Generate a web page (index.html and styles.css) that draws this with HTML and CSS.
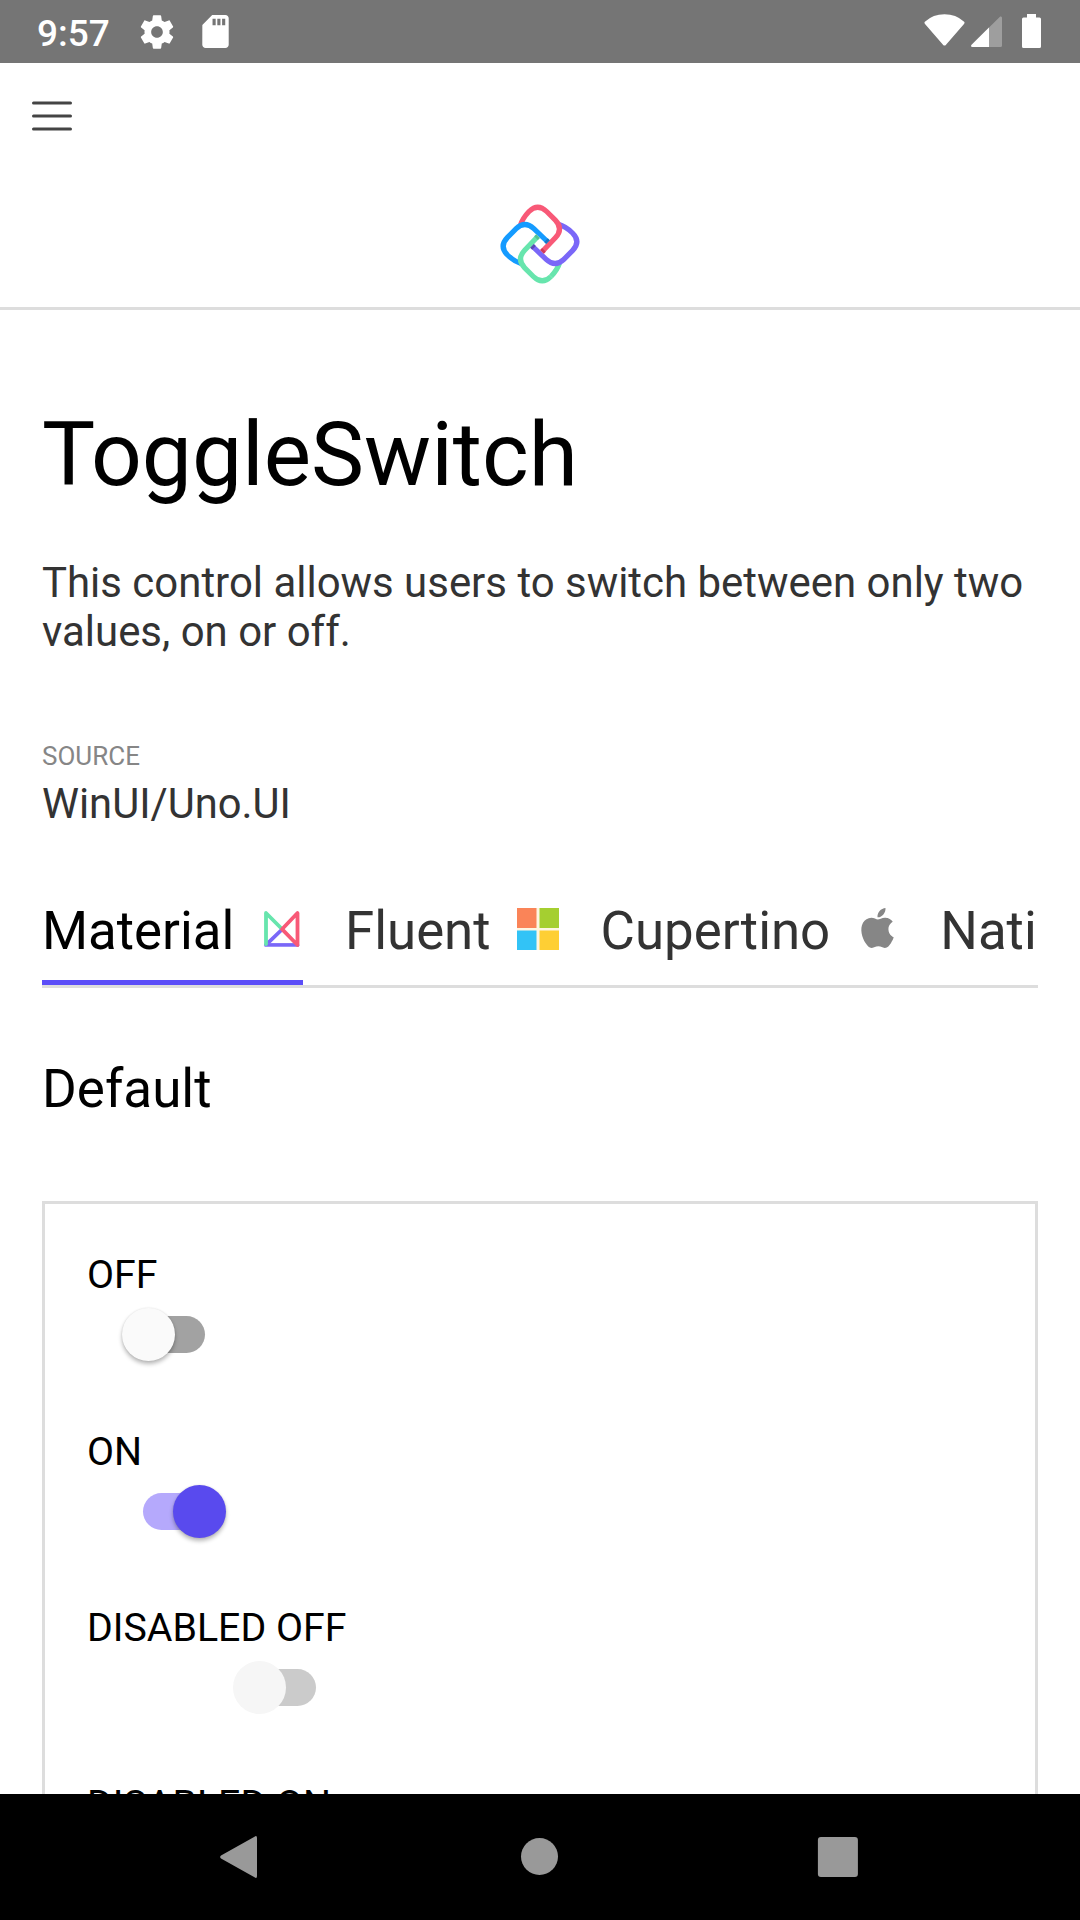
FILE: index.html
```html
<!DOCTYPE html>
<html lang="en">
<head>
<meta charset="utf-8">
<title>ToggleSwitch</title>
<link rel="stylesheet" href="styles.css">
</head>
<body>
<div class="screen">
  <div class="status-bar">
    <span class="time">9:57</span>
    <svg class="icon-gear" viewBox="0 0 24 24"><path d="M19.43 12.98c.04-.32.07-.64.07-.98s-.03-.66-.07-.98l2.11-1.65c.19-.15.24-.42.12-.64l-2-3.46c-.12-.22-.39-.3-.61-.22l-2.49 1c-.52-.4-1.08-.73-1.69-.98l-.38-2.65C14.46 2.18 14.25 2 14 2h-4c-.25 0-.46.18-.49.42l-.38 2.65c-.61.25-1.17.59-1.69.98l-2.49-1c-.23-.09-.49 0-.61.22l-2 3.46c-.13.22-.07.49.12.64l2.11 1.65c-.04.32-.07.65-.07.98s.03.66.07.98l-2.11 1.65c-.19.15-.24.42-.12.64l2 3.46c.12.22.39.3.61.22l2.49-1c.52.4 1.08.73 1.69.98l.38 2.65c.03.24.24.42.49.42h4c.25 0 .46-.18.49-.42l.38-2.65c.61-.25 1.17-.59 1.69-.98l2.49 1c.23.09.49 0 .61-.22l2-3.46c.12-.22.07-.49-.12-.64l-2.11-1.65zM12 15.5c-1.93 0-3.5-1.57-3.5-3.5s1.57-3.5 3.5-3.5 3.5 1.57 3.5 3.5-1.57 3.5-3.5 3.5z"/></svg>
    <svg class="icon-sd" viewBox="4 2 16 20"><path fill-rule="evenodd" d="M18 2h-8L4.02 8 4 20c0 1.100.9 2 2 2h12c1.100 0 2-.9 2-2V4c0-1.100-.9-2-2-2zM10.200 4.200v4h1.900v-4zM13.100 4.200v4h1.900v-4zM16 4.200v4h1.900v-4z"/></svg>
    <div class="status-right">
      <svg class="icon-wifi" viewBox="0 0 41 32"><path d="M1.200 7.500Q9 .2 20.500.2T39.800 7.500Q41.200 8.500 40 10L22 30.700Q20.500 32.400 19 30.700L1 10Q-.2 8.500 1.200 7.500z"/></svg>
      <svg class="icon-signal" viewBox="0 0 31 31"><path opacity=".3" d="M29.200.6Q31 0 31 2v27.500q0 1.500-1.500 1.500H1.500Q-.8 30.600.6 28.700z"/><path d="M18 11.500V31H1.500Q-.8 30.600.6 28.700z"/></svg>
      <svg class="icon-battery" viewBox="0 0 19 34"><path d="M5 0h9v3.500h3.500q1.500 0 1.500 1.500v27.500q0 1.500-1.500 1.500h-16Q0 34 0 32.500V5q0-1.500 1.500-1.500H5z"/></svg>
    </div>
  </div>

  <header class="app-header">
    <svg class="menu" viewBox="0 0 40 30"><path d="M1.500 2.100h37M1.500 15h37M1.500 27.900h37"/></svg>
    <svg class="logo" viewBox="60 40.500 240 240">
      <path class="green" transform="rotate(180 180 160.500)" d="M121 105Q127 84 147 63"/>
      <path class="purple" transform="rotate(90 180 160.500)" d="M121 105Q127 84 147 63Q173 37 200 63L226 89Q251 115 226 142L186 184"/>
      <path class="red" d="M121 105Q127 84 147 63Q173 37 200 63L226 89Q251 115 226 142L186 184"/>
      <path class="blue" transform="rotate(270 180 160.500)" d="M121 105Q127 84 147 63Q173 37 200 63L226 89Q251 115 226 142L186 184"/>
      <path class="green" transform="rotate(180 180 160.500)" d="M147 63Q173 37 200 63L226 89Q251 115 226 142L186 184"/>
      <path class="tip-red" d="M192 178L186 184"/>
      <path class="tip-purple" d="M162 172L156 166"/>
      <path class="tip-green" d="M168 143L174 137"/>
      <path class="tip-blue" d="M198 149L204 155"/>
    </svg>
  </header>

  <main class="content">
    <h1>ToggleSwitch</h1>
    <p class="description">This control allows users to switch between only two values, on or off.</p>
    <div class="source-label">SOURCE</div>
    <div class="source-value">WinUI/Uno.UI</div>

    <nav class="tabs">
      <div class="tab active"><span>Material</span>
        <svg class="tab-icon" viewBox="0 0 42 42"><g fill="none" stroke-width="3.800" stroke-linecap="round" stroke-linejoin="round"><path stroke="#7a67f8" d="M21.500 21L5 36.800"/><path stroke="#9c8ffa" d="M5 37.200H36.500"/><path stroke="#7a67f8" stroke-width="2.800" d="M5 36.600H36.500"/><path stroke="#67e5ad" d="M5 36V5L20.500 20.500"/><path stroke="#f85977" d="M21 21.200L36.500 5v32z"/></g></svg>
      </div>
      <div class="tab"><span>Fluent</span>
        <svg class="tab-icon" viewBox="0 0 42 42"><path fill="#fdf6e2" d="M0 0h42v42H0z"/><path fill="#fa8458" d="M0 0h19.500v20H0z"/><path fill="#a5cf30" d="M22.500 0H42v20H22.500z"/><path fill="#32c3f6" d="M0 22.500h19.500V42H0z"/><path fill="#fecf34" d="M22.500 22.500H42V42H22.500z"/></svg>
      </div>
      <div class="tab"><span>Cupertino</span>
        <svg class="tab-icon" viewBox="1.200 2 21 21"><path fill="#868686" d="M18.710 19.500c-.83 1.240-1.710 2.450-3.050 2.470-1.340.03-1.770-.79-3.290-.79-1.530 0-2 .77-3.270.82-1.310.05-2.300-1.320-3.140-2.530C4.250 17 2.940 12.450 4.700 9.390c.87-1.520 2.430-2.480 4.120-2.510 1.280-.02 2.500.87 3.290.87.78 0 2.260-1.070 3.810-.91.65.03 2.470.26 3.640 1.980-.09.06-2.170 1.280-2.150 3.810.03 3.020 2.650 4.030 2.680 4.040-.03.07-.42 1.440-1.380 2.830M13 3.500c.73-.83 1.940-1.460 2.940-1.500.13 1.170-.34 2.350-1.040 3.190-.69.85-1.830 1.510-2.950 1.420-.15-1.150.41-2.350 1.050-3.110z"/></svg>
      </div>
      <div class="tab"><span>Nati</span></div>
    </nav>

    <h2>Default</h2>
    <section class="samples">
      <div class="sample"><div class="label">OFF</div><div class="switch off"><i class="thumb"></i></div></div>
      <div class="sample"><div class="label">ON</div><div class="switch on"><i class="thumb"></i></div></div>
      <div class="sample"><div class="label">DISABLED OFF</div><div class="switch off disabled"><i class="thumb"></i></div></div>
      <div class="sample"><div class="label">DISABLED ON</div></div>
    </section>
  </main>

  <footer class="nav-bar">
    <svg class="nav-icon" viewBox="0 0 42 42"><path d="M36.500.7Q39-1 39 2v38q0 3-2.500 1.300L3 22.500Q1.300 21 3 19.500z"/></svg>
    <svg class="nav-icon" viewBox="0 0 42 42"><circle cx="21.500" cy="20.500" r="18.500"/></svg>
    <svg class="nav-icon" viewBox="0 0 42 42"><rect x=".9" y="1" width="40" height="40" rx="3"/></svg>
  </footer>
</div>
</body>
</html>
```
FILE: styles.css
```css
* { box-sizing: border-box; margin: 0; padding: 0; }

body {
  font-family: Roboto, "Liberation Sans", sans-serif;
  background: #fff;
  color: #000;
}

svg { display: block; flex: none; }

.screen {
  width: 1080px;
  height: 1920px;
  display: flex;
  flex-direction: column;
  overflow: hidden;
}

.status-bar {
  flex: none;
  height: 63px;
  padding: 0 39px 0 37px;
  display: flex;
  align-items: center;
  background: #757575;
  color: #fff;
  fill: #fff;
}
.time {
  width: 100px;
  font-size: 37px;
  font-weight: 500;
  line-height: 59px;
  padding-top: 4px;
}
.icon-gear { width: 40px; height: 40px; }
.icon-sd { width: 27px; height: 33px; margin-left: 25px; }
.status-right {
  margin-left: auto;
  display: flex;
  align-items: center;
}
.icon-wifi { width: 41px; height: 32px; margin-top: -3px; }
.icon-signal { width: 31px; height: 31px; margin-left: 6px; }
.icon-battery { width: 19px; height: 34px; margin: -1px 0 0 20px; }

.app-header {
  flex: none;
  height: 247px;
  border-bottom: 3px solid #ddd;
  padding-top: 38px;
}
.menu {
  width: 40px;
  height: 30px;
  margin-left: 32px;
  fill: none;
  stroke: #444;
  stroke-width: 3;
  stroke-linecap: round;
}
.logo {
  width: 80px;
  height: 80px;
  margin: 72.500px auto 0;
  fill: none;
  stroke-width: 15.500;
}
.red { stroke: #f85977; }
.purple { stroke: #7a67f8; }
.green { stroke: #67e5ad; }
.blue { stroke: #159bff; }
.tip-red { stroke: #d03a5c; }
.tip-purple { stroke: #5b49b4; }
.tip-green { stroke: #55c394; }
.tip-blue { stroke: #1976c4; }

.content {
  flex: 1;
  min-height: 0;
  overflow: hidden;
  padding: 92px 42px 0;
}

h1 {
  font-size: 89.250px;
  font-weight: 400;
  line-height: 105px;
}
.description {
  margin-top: 51px;
  font-size: 41.950px;
  line-height: 49px;
  color: #333;
}
.source-label {
  margin-top: 85px;
  font-size: 26px;
  line-height: 31px;
  color: #868686;
}
.source-value {
  margin-top: 7px;
  font-size: 41.700px;
  line-height: 49px;
  color: #333;
}

.tabs {
  margin-top: 64px;
  height: 96px;
  display: flex;
  gap: 42px;
  overflow: hidden;
  border-bottom: 3px solid #ddd;
}
.tab {
  flex: none;
  display: flex;
  justify-content: space-between;
  gap: 26px;
  height: 93px;
  font-size: 52.800px;
  line-height: 78px;
  color: #333;
}
.tab-icon { width: 42px; height: 42px; margin-top: 16px; }
.tab.active {
  width: 261px;
  color: #000;
  border-bottom: 5px solid #5b4df8;
}

h2 {
  margin-top: 70px;
  font-size: 53px;
  font-weight: 400;
  line-height: 62px;
}

.samples {
  margin-top: 81px;
  height: 700px;
  border: 3px solid #ddd;
  padding: 48px 42px 0;
}
.sample { height: 176.500px; }
.label {
  font-size: 39.300px;
  line-height: 46px;
}

.switch {
  position: relative;
  width: 75px;
  height: 37px;
  margin-top: 18px;
  border-radius: 19px;
}
.switch.off { margin-left: 43px; background: #a2a2a2; }
.switch.on { margin-left: 56px; background: #b5a9fc; }
.switch.disabled { margin-left: 154px; background: #cbcbcb; }
.thumb {
  position: absolute;
  top: -8px;
  width: 53px;
  height: 53px;
  border-radius: 50%;
  box-shadow: 0 3px 4px rgba(0, 0, 0, .28), 0 0 2px rgba(0, 0, 0, .1);
}
.off .thumb { left: -8px; background: #fafafa; }
.on .thumb { right: -8px; background: #594aee; }
.disabled .thumb { background: #f6f6f6; box-shadow: none; }

.nav-bar {
  flex: none;
  height: 126px;
  padding: 0 221px 0 218px;
  display: flex;
  justify-content: space-between;
  align-items: center;
  background: #000;
  fill: #999;
}
.nav-icon { width: 42px; height: 42px; }
```
